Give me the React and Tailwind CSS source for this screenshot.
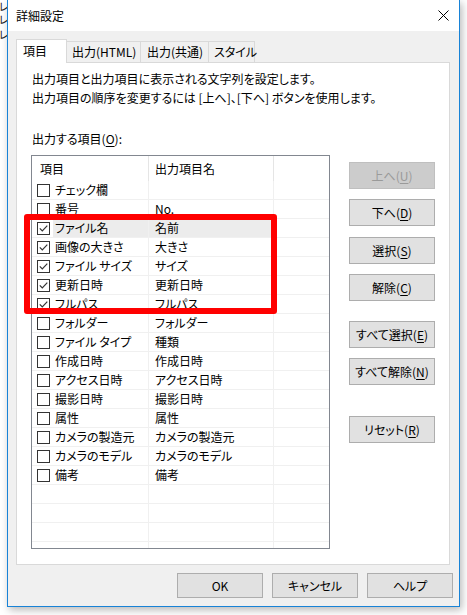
import React from "react";

const items = [
  ["チェック欄", "", false],
  ["番号", "No.", false],
  ["ファイル名", "名前", true, true],
  ["画像の大きさ", "大きさ", true],
  ["ファイル サイズ", "サイズ", true],
  ["更新日時", "更新日時", true],
  ["フルパス", "フルパス", true],
  ["フォルダー", "フォルダー", false],
  ["ファイル タイプ", "種類", false],
  ["作成日時", "作成日時", false],
  ["アクセス日時", "アクセス日時", false],
  ["撮影日時", "撮影日時", false],
  ["属性", "属性", false],
  ["カメラの製造元", "カメラの製造元", false],
  ["カメラのモデル", "カメラのモデル", false],
  ["備考", "備考", false],
];

function Cb({ checked }) {
  return (
    <div className="w-[13px] h-[13px] shrink-0 border border-[#333333] bg-white flex items-center justify-center">
      {checked && (
        <svg width="11" height="11" viewBox="0 0 11 11">
          <path d="M1.8 5.3 L4.3 7.9 L9.3 2.6" stroke="#333333" strokeWidth="1.2" fill="none" />
        </svg>
      )}
    </div>
  );
}

function Row({ name, out, checked, selected, empty }) {
  return (
    <div className="flex h-[19px] shrink-0 border-b border-[#f0f0f0]">
      <div className="w-[116px] flex items-center pl-[5px]">
        {!empty && <Cb checked={checked} />}
        {!empty && (
          <div className={"ml-[3px] pl-[2px] flex-1 h-full flex items-center whitespace-nowrap " + (selected ? "bg-[#ececec]" : "")}>
            {name}
          </div>
        )}
      </div>
      <div className={"w-[125px] border-l border-[#f0f0f0] pl-[6px] flex items-center whitespace-nowrap " + (selected ? "bg-[#ececec]" : "")}>
        {out}
      </div>
      <div className="flex-1 border-l border-[#f0f0f0]"></div>
    </div>
  );
}

function Btn({ children, disabled, className = "" }) {
  return (
    <div
      className={
        "w-[86px] h-[27px] flex items-center justify-center border whitespace-nowrap " +
        (disabled ? "bg-[#cccccc] border-[#bfbfbf] text-[#9a9a9a] " : "bg-[#e1e1e1] border-[#adadad] text-black ") +
        className
      }
    >
      {children}
    </div>
  );
}

function U({ children }) {
  return <span className="underline underline-offset-2">{children}</span>;
}

export default function App() {
  return (
    <div className="w-[467px] h-[615px] bg-white overflow-hidden flex text-[12px] leading-[18px] text-black font-['Noto_Sans_CJK_JP','Noto_Sans',sans-serif] [font-feature-settings:'palt'] relative">
      {/* behind-window strip */}
      <div className="w-[7px] shrink-0 overflow-hidden flex flex-col text-[11px] leading-[12px] text-[#222]">
        <div className="-ml-[1px] h-[12px]">レ</div>
        <div className="-ml-[1px] h-[12px] mt-[1px]">レ</div>
        <div className="-ml-[1px] h-[12px] mt-[3px]">レ</div>
      </div>

      {/* window */}
      <div className="w-[453px] h-[607px] shrink-0 border border-t-0 border-[#1883d7] flex flex-col shadow-[2px_3px_8px_rgba(0,0,0,0.28)]">
        {/* title bar */}
        <div className="h-[31px] shrink-0 bg-white flex items-center justify-between pl-[8px] pr-[10px]">
          <span>詳細設定</span>
          <svg width="11" height="11" viewBox="0 0 11 11">
            <path d="M0.5 0.5 L10.5 10.5 M10.5 0.5 L0.5 10.5" stroke="#000" strokeWidth="1" />
          </svg>
        </div>

        {/* body */}
        <div className="flex-1 bg-[#f0f0f0] flex flex-col pl-[8px] pt-[8px]">
          {/* tabs */}
          <div className="h-[23px] flex items-end shrink-0 whitespace-nowrap">
            <div className="w-[51px] h-[24px] -mb-[1px] relative z-10 bg-white border border-b-0 border-[#d9d9d9] pl-[6px] flex items-center pb-[1px]">
              項目
            </div>
            <div className="w-[74px] h-[21px] border-t border-r border-[#d9d9d9] pl-[5px] flex items-center">
              出力(HTML)
            </div>
            <div className="w-[68px] h-[21px] border-t border-r border-[#d9d9d9] pl-[6px] flex items-center">
              出力(共通)
            </div>
            <div className="w-[46px] h-[21px] border-t border-r border-[#d9d9d9] pl-[5px] flex items-center">
              スタイル
            </div>
          </div>

          {/* panel */}
          <div className="w-[434px] h-[503px] shrink-0 bg-white border border-[#d9d9d9] pl-[14px] pt-[7px] flex flex-col">
            <div className="pl-[1px]">出力項目と出力項目に表示される文字列を設定します。</div>
            <div className="pl-[1px] mt-[1px] whitespace-nowrap">出力項目の順序を変更するには [上へ]、[下へ] ボタンを使用します。</div>
            <div className="pl-[1px] mt-[23px]">
              出力する項目(<U>O</U>):
            </div>
            <div className="flex mt-[7px]">
              {/* list */}
              <div className="w-[299px] h-[394px] border border-[#828790] flex flex-col overflow-hidden">
                <div className="h-[25px] shrink-0 flex">
                  <div className="w-[116px] pl-[8px] flex items-center">項目</div>
                  <div className="w-[125px] border-l border-[#e5e5e5] pl-[6px] flex items-center">出力項目名</div>
                  <div className="flex-1 border-l border-[#e5e5e5]"></div>
                </div>
                {items.map((it, i) => (
                  <Row key={i} name={it[0]} out={it[1]} checked={it[2]} selected={it[3]} />
                ))}
                {[0, 1, 2, 3].map((i) => (
                  <Row key={"e" + i} empty name="" out="" />
                ))}
              </div>

              {/* buttons */}
              <div className="ml-[19px] flex flex-col pt-[7px]">
                <Btn disabled>
                  上へ(<U>U</U>)
                </Btn>
                <Btn className="mt-[10px]">
                  下へ(<U>D</U>)
                </Btn>
                <Btn className="mt-[11px]">
                  選択(<U>S</U>)
                </Btn>
                <Btn className="mt-[10px]">
                  解除(<U>C</U>)
                </Btn>
                <Btn className="mt-[20px]">
                  すべて選択(<U>E</U>)
                </Btn>
                <Btn className="mt-[10px]">
                  すべて解除(<U>N</U>)
                </Btn>
                <Btn className="mt-[31px]">
                  リセット(<U>R</U>)
                </Btn>
              </div>
            </div>
          </div>

          {/* bottom buttons */}
          <div className="flex justify-end gap-[9px] pr-[6px] mt-[8px]">
            <div className="w-[86px] h-[25px] bg-[#e1e1e1] border border-[#adadad] flex items-center justify-center">OK</div>
            <div className="w-[86px] h-[25px] bg-[#e1e1e1] border border-[#adadad] flex items-center justify-center">キャンセル</div>
            <div className="w-[86px] h-[25px] bg-[#e1e1e1] border border-[#adadad] flex items-center justify-center">ヘルプ</div>
          </div>
        </div>
      </div>

      {/* red annotation box */}
      <div className="absolute left-[24px] top-[214px] w-[253px] h-[100px] border-[6px] border-[#ff0000] rounded-[3px]"></div>
    </div>
  );
}
